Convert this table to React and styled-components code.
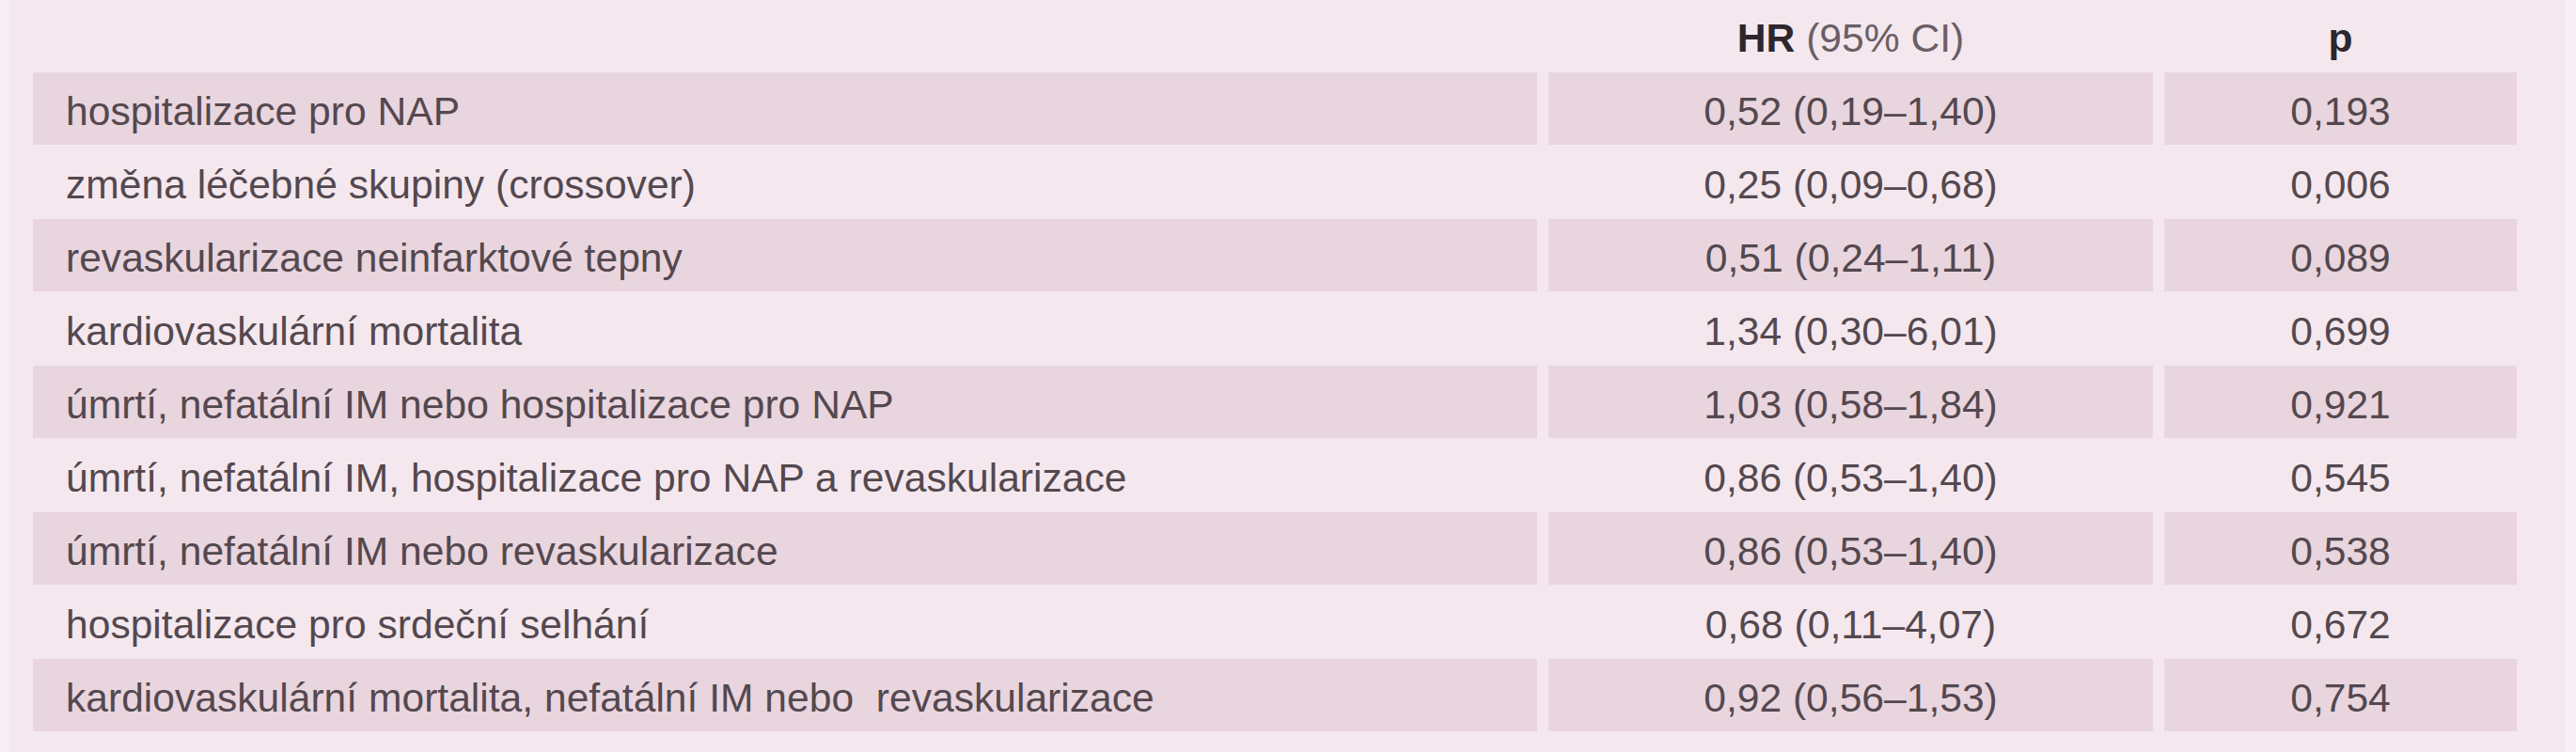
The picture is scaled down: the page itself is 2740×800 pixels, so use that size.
import React from 'react'
import styled, { createGlobalStyle } from 'styled-components';

const rows = [
    ['hospitalizace pro NAP', '0,52 (0,19–1,40)', '0,193'],
    ['změna léčebné skupiny (crossover)', '0,25 (0,09–0,68)', '0,006'],
    ['revaskularizace neinfarktové tepny', '0,51 (0,24–1,11)', '0,089'],
    ['kardiovaskulární mortalita', '1,34 (0,30–6,01)', '0,699'],
    ['úmrtí, nefatální IM nebo hospitalizace pro NAP', '1,03 (0,58–1,84)', '0,921'],
    ['úmrtí, nefatální IM, hospitalizace pro NAP a revaskularizace', '0,86 (0,53–1,40)', '0,545'],
    ['úmrtí, nefatální IM nebo revaskularizace', '0,86 (0,53–1,40)', '0,538'],
    ['hospitalizace pro srdeční selhání', '0,68 (0,11–4,07)', '0,672'],
    ['kardiovaskulární mortalita, nefatální IM nebo  revaskularizace', '0,92 (0,56–1,53)', '0,754'],
];

export default () =>
    <>
        <Global />
        <Page>
            <Box>
                <HeadRow>
                    <HeadCell />
                    <HeadCell align='center'><Strong>HR</Strong> (95% CI)</HeadCell>
                    <HeadCell align='center'><Strong>p</Strong></HeadCell>
                </HeadRow>
                {rows.map(([label, hr, p], i) =>
                    <Row key={label}>
                        <Cell shaded={i % 2 === 0}>{label}</Cell>
                        <Cell shaded={i % 2 === 0} align='center'>{hr}</Cell>
                        <Cell shaded={i % 2 === 0} align='center'>{p}</Cell>
                    </Row>
                )}
            </Box>
        </Page>
    </>

const Global = createGlobalStyle`
    body {
        margin: 0;
        background: #f7eff3;
        font-family: "Liberation Sans", Arial, sans-serif;
    }
`;

const Page = styled.div`
    min-height: 100vh;
    padding: 0 12px 0 10px;
`;

const Box = styled.div`
    min-height: 100vh;
    background: #f4e8ee;
    padding: 0 0 0 25px;
    display: flex;
    flex-direction: column;
    gap: 1px;
`;

const HeadRow = styled.div`
    display: grid;
    grid-template-columns: 1600px 643px 375px;
    column-gap: 12px;
    height: 76px;
`;

const Row = styled(HeadRow)`
    height: 77px;
`;

const Cell = styled.div`
    box-sizing: border-box;
    display: flex;
    align-items: center;
    justify-content: ${p => p.align === 'center' ? 'center' : 'flex-start'};
    padding: 5px 0 0 ${p => p.align === 'center' ? '0' : '35px'};
    background: ${p => p.shaded ? '#e9d5de' : 'transparent'};
    color: #54484f;
    font-size: 42.6px;
    white-space: pre;
`;

const HeadCell = styled(Cell)`
    padding-top: 4px;
    color: #6a5f66;
`;

const Strong = styled.span`
    font-weight: 700;
    color: #2e262c;
`;
